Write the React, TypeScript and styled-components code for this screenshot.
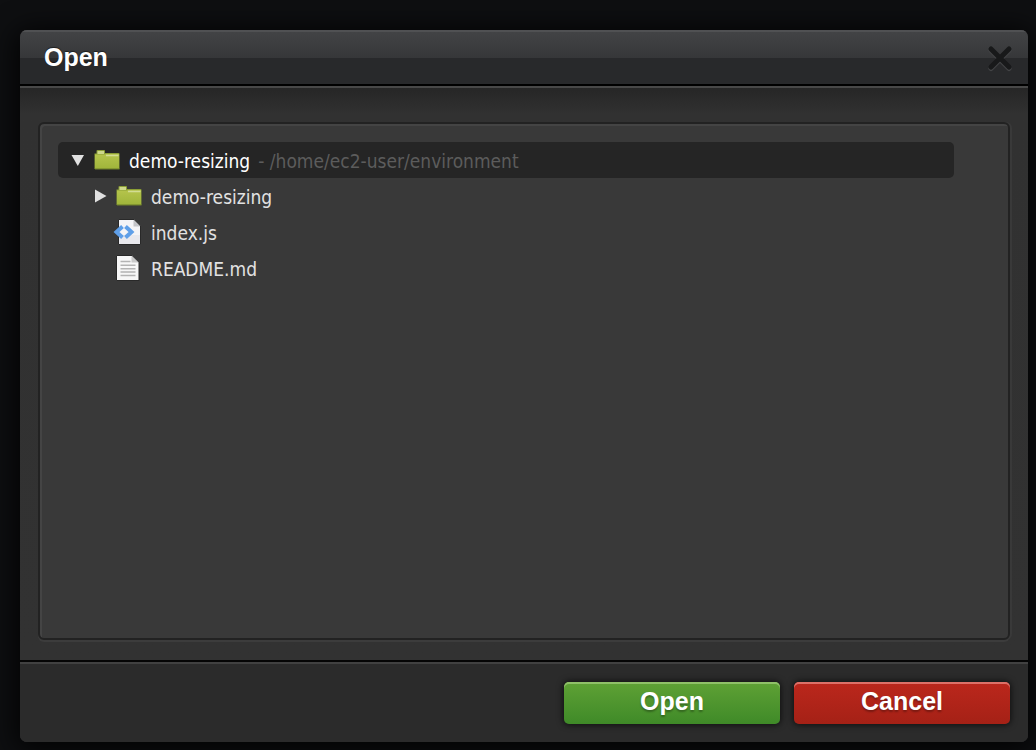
import React from "react";
import styled, { createGlobalStyle } from "styled-components";

const GlobalStyle = createGlobalStyle`
  *, *::before, *::after { box-sizing: border-box; }
  body {
    margin: 0;
    background: #0e0f11;
    font-family: "DejaVu Sans Condensed", Tahoma, "DejaVu Sans", sans-serif;
  }
`;

const Page = styled.div`
  display: flex;
  min-height: 100vh;
  padding: 30px 8px 8px 20px;
  overflow: hidden;
`;

const Dialog = styled.section`
  display: flex;
  flex: 1;
  flex-direction: column;
  min-width: 0;
  overflow: hidden;
  border-radius: 7px;
  background: #323232;
`;

const Shadow = styled.div`
  display: flex;
  flex: 1;
  min-width: 0;
  border-radius: 7px;
  box-shadow: 0 4px 28px 4px rgba(0, 0, 0, 0.85);
`;

const Header = styled.header`
  display: flex;
  align-items: center;
  justify-content: space-between;
  height: 56px;
  padding: 0 15px 0 24px;
  border-bottom: 2px solid #000;
  background: linear-gradient(#434446 0, #363739 28px, #28292b 28px, #28292b 100%);
  box-shadow: inset 0 2px 0 #505153;
`;

const Title = styled.h1`
  margin: 0;
  color: #fff;
  font: bold 25px/30px "Liberation Sans", Arial, sans-serif;
  text-shadow: 0 -1px 1px rgba(0, 0, 0, 0.5);
`;

const CloseButton = styled.button`
  display: flex;
  padding: 2px 0 0;
  border: 0;
  background: none;
  cursor: pointer;
`;

const Body = styled.div`
  display: flex;
  flex: 1;
  padding: 34px 18px 20px;
  border-top: 2px solid #484848;
  background: linear-gradient(#262626 0, #313131 26px, #323232 100%);
`;

const TreePanel = styled.div`
  flex: 1;
  min-width: 0;
  padding: 18px 54px 18px 18px;
  border: 2px solid #222;
  border-radius: 6px;
  background: #393939;
  box-shadow: 0 2px 0 #3c3c3c, 2px 0 0 #393939, inset 2px 2px 0 #444;
`;

const Tree = styled.ul`
  margin: 0;
  padding: 0;
  list-style: none;
`;

const Row = styled.li<{ $depth: number; $selected?: boolean }>`
  display: flex;
  align-items: center;
  height: 36px;
  padding-left: ${(p) => 12 + p.$depth * 22}px;
  border-radius: 5px;
  background: ${(p) => (p.$selected ? "#252525" : "transparent")};
  color: ${(p) => (p.$selected ? "#fff" : "#e2e2e2")};
  font-size: 19px;
  line-height: 24px;
  white-space: nowrap;
`;

const Toggle = styled.span`
  display: flex;
  width: 24px;
  flex: none;
`;

const IconSlot = styled.span`
  display: flex;
  width: 35px;
  flex: none;
`;

const Label = styled.span`
  padding-top: 2px;
`;

const Path = styled(Label)`
  margin-left: 8px;
  color: #5c5c5c;
`;

const Footer = styled.footer`
  display: flex;
  justify-content: flex-end;
  gap: 14px;
  padding: 20px 18px 18px;
  border-top: 2px solid #050505;
  background: #2b2b2b;
  box-shadow: inset 0 2px 0 #414141;
`;

const tones = {
  green: { from: "#5fa135", to: "#3f8a28", edge: "#8fc068" },
  red: { from: "#bb271c", to: "#a52116", edge: "#dd7068" },
};

const ActionButton = styled.button<{ $tone: keyof typeof tones }>`
  width: 216px;
  height: 42px;
  padding: 0 0 4px;
  border: 0;
  border-radius: 5px;
  background: linear-gradient(${(p) => tones[p.$tone].from}, ${(p) => tones[p.$tone].to});
  box-shadow: inset 0 2px 0 ${(p) => tones[p.$tone].edge}, 0 0 6px 1px rgba(0, 0, 0, 0.65);
  color: #fff;
  font: bold 25px/30px "Liberation Sans", Arial, sans-serif;
  text-shadow: 0 2px 2px rgba(0, 0, 0, 0.3);
  cursor: pointer;
`;

const CloseIcon = () => (
  <svg width="26" height="28" viewBox="0 0 26 28" fill="none" strokeWidth="5" strokeLinecap="round" aria-hidden="true">
    <path d="M4 6.500 22 24.500M22 6.500 4 24.500" stroke="#424345" />
    <path d="M4 5 22 23M22 5 4 23" stroke="#18191a" />
  </svg>
);

const Arrow = ({ open }: { open?: boolean }) => (
  <svg width="15" height="14" viewBox="0 0 15 14" fill="#e0e0e0" aria-hidden="true">
    <path d={open ? "M1.5 2H14L7.8 13Z" : "M3 .5 14.5 7 3 13.5Z"} />
  </svg>
);

const FolderIcon = () => (
  <svg width="26" height="22" viewBox="0 0 26 22" aria-hidden="true">
    <defs>
      <linearGradient id="folder" x1="0" y1="0" x2="0" y2="1">
        <stop offset="0" stopColor="#b5c44c" />
        <stop offset="1" stopColor="#a0b53b" />
      </linearGradient>
    </defs>
    <path d="M2.500 4.500V2q0-1 1-1h6.500q1 0 1 1v2h13.500q1 0 1 1v15H.5V4.500Z" fill="#8b9e35" />
    <path d="M3.500 4.500V2H10v3H3.500Z" fill="#ced88b" />
    <path d="M1 5.500h10.500V5h13.500v14.500H1Z" fill="url(#folder)" />
    <path d="M12 6.500h12.500" stroke="#d2dc93" strokeWidth="1.500" />
    <path d="M1 20h24.500" stroke="#72842a" />
  </svg>
);

const CodeFileIcon = () => (
  <svg width="28" height="28" viewBox="0 0 28 28" overflow="visible" aria-hidden="true">
    <path d="M2.500 1.500h15.500l6.500 6.500v18.500h-22Z" fill="#f4f4f7" stroke="#292929" />
    <path d="M3 17h21v9H3Z" fill="#e8e8ed" />
    <path d="M17.500 2v6.500H24Z" fill="#c3c4c8" />
    <path d="M6.500 8.500.5 14l6 5.500M9.500 8.500l6 5.500-6 5.500" fill="none" stroke="#5f9fe8" strokeWidth="4" />
  </svg>
);

const TextFileIcon = () => (
  <svg width="28" height="28" viewBox="0 0 28 28" aria-hidden="true">
    <path d="M.5 1.500h15.500l7 7v18H.5Z" fill="#f7f7f7" stroke="#292929" />
    <path d="M15.500 2v6.500H22.500Z" fill="#c8c8c8" />
    <path d="M4.500 7.500h10M4.500 11.300h15M4.500 14.700h15M4.500 18.100h15M4.500 21.500h15" stroke="#b3b3b3" strokeWidth="1.500" />
  </svg>
);

const icons = { folder: FolderIcon, code: CodeFileIcon, text: TextFileIcon };

type Entry = {
  name: string;
  icon: keyof typeof icons;
  depth: number;
  folder?: "open" | "closed";
  path?: string;
};

const entries: Entry[] = [
  { name: "demo-resizing", icon: "folder", depth: 0, folder: "open", path: "/home/ec2-user/environment" },
  { name: "demo-resizing", icon: "folder", depth: 1, folder: "closed" },
  { name: "index.js", icon: "code", depth: 1 },
  { name: "README.md", icon: "text", depth: 1 },
];

export default function App() {
  return (
    <>
      <GlobalStyle />
      <Page>
        <Shadow>
          <Dialog role="dialog" aria-labelledby="dialog-title">
            <Header>
              <Title id="dialog-title">Open</Title>
              <CloseButton type="button" aria-label="Close">
                <CloseIcon />
              </CloseButton>
            </Header>
            <Body>
              <TreePanel>
                <Tree role="tree" aria-label="Files">
                  {entries.map((entry, index) => {
                    const Icon = icons[entry.icon];
                    return (
                      <Row
                        key={index}
                        role="treeitem"
                        aria-selected={index === 0}
                        aria-level={entry.depth + 1}
                        aria-expanded={entry.folder ? entry.folder === "open" : undefined}
                        $depth={entry.depth}
                        $selected={index === 0}
                      >
                        <Toggle>{entry.folder && <Arrow open={entry.folder === "open"} />}</Toggle>
                        <IconSlot>
                          <Icon />
                        </IconSlot>
                        <Label>{entry.name}</Label>
                        {entry.path && <Path>- {entry.path}</Path>}
                      </Row>
                    );
                  })}
                </Tree>
              </TreePanel>
            </Body>
            <Footer>
              <ActionButton type="button" $tone="green">Open</ActionButton>
              <ActionButton type="button" $tone="red">Cancel</ActionButton>
            </Footer>
          </Dialog>
        </Shadow>
      </Page>
    </>
  );
}
